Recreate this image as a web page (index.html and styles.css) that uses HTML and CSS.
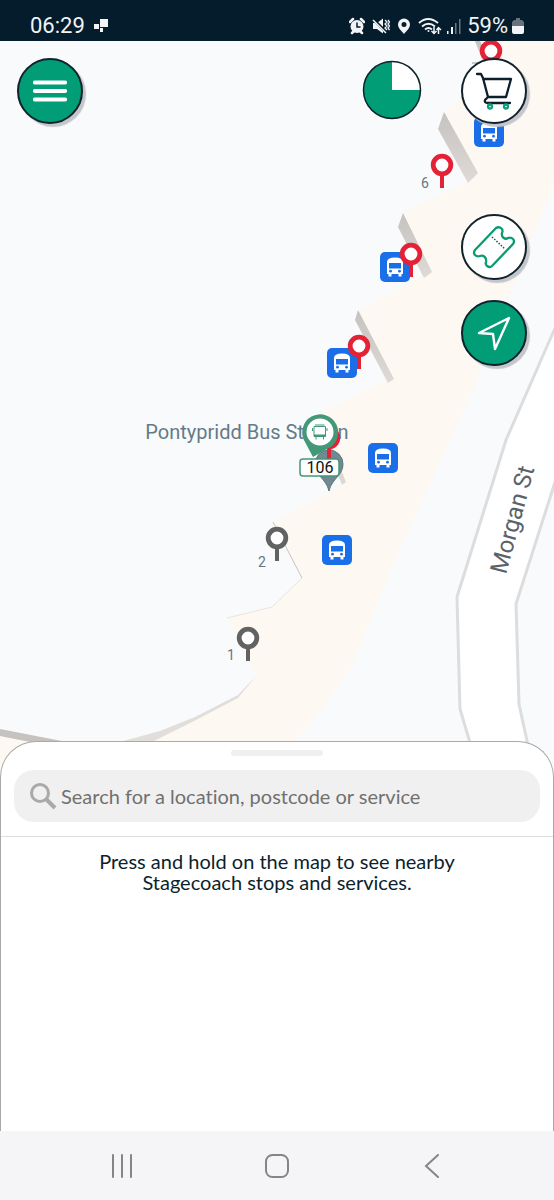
FILE: index.html
```html
<!DOCTYPE html>
<html lang="en">
<head>
<meta charset="utf-8">
<meta name="viewport" content="width=device-width, initial-scale=1">
<title>Stagecoach map</title>
<link rel="stylesheet" href="styles.css">
</head>
<body>
<header class="status">
  <div class="status-group">
    <span>06:29</span>
    <svg class="status-app" width="16" height="16" viewBox="0 0 16 16" fill="#f1f3f6"><path d="M7 1h8v8H7zM1 6h5v5H1zM7 10h3v4H7z"/></svg>
  </div>
  <div class="status-group status-right">
    <svg width="16" height="18" viewBox="0 0 16 18"><circle cx="8" cy="9.500" r="6.500" fill="#f1f3f6"/><path d="M1 5l3-3M15 5l-3-3M3 16l2-2M13 16l-2-2" stroke="#f1f3f6" stroke-width="2.500" stroke-linecap="round"/><path d="M8 5.500V10h3.500" fill="none" stroke="#041c2c" stroke-width="1.500"/></svg>
    <svg class="mute" width="18" height="18" viewBox="0 0 18 18"><path d="M1 6h4l6-4.500v15L5 12H1z" fill="#f1f3f6"/><path d="M1 2l14 14" stroke="#041c2c" stroke-width="3"/><path d="M1 3l13 13" stroke="#f1f3f6" stroke-width="1.500"/><path d="M13 3l2 2-2 2 2 2-2 2 2 2M16 3l1.500 2L16 7l1.500 2L16 11l1.500 2" fill="none" stroke="#f1f3f6" stroke-width="1.300"/></svg>
    <svg class="place" width="14" height="18" viewBox="0 0 14 18"><path fill-rule="evenodd" d="M7 1.500a6 6 0 0 1 6 6C13 11 9.500 14 7 17 4.500 14 1 11 1 7.500a6 6 0 0 1 6-6zM7 5a2.500 2.500 0 1 0 0 5 2.500 2.500 0 0 0 0-5z" fill="#f1f3f6"/></svg>
    <svg class="wifi" width="24" height="18" viewBox="0 0 24 18" fill="none" stroke="#f1f3f6" stroke-width="2"><path d="M1 6Q10-2 20 6M4 9.500Q10.500 4 17 9.500M7 12.500q3.500-3 7 0"/><circle cx="10.500" cy="14" r="1" fill="#f1f3f6" stroke="none"/><path d="M16 10v6M13.500 14l2.500 2.500 2.500-2.500M20.500 17v-6M18.500 13l2-2.500 2.500 2.500" stroke-width="1.500"/></svg>
    <svg class="signal" width="15" height="18" viewBox="0 0 15 18"><path fill="#f1f3f6" d="M1 14h1.500v3H1zM5 10h2v7H5z"/><path fill="#667785" d="M9 6h1.500v11H9zM13 2h1.500v15H13z"/></svg>
    <span>59%</span>
    <svg class="battery" width="12" height="17" viewBox="0 0 12 17"><path d="M4 0h4v2h2l2 2v4H0V4l2-2h2z" fill="#68727b"/><path d="M0 8h12v6q0 2-2 2H2q-2 0-2-2z" fill="#f1f3f6"/></svg>
  </div>
</header>

<main class="stage">
  <svg class="map" viewBox="0 41 554 1090" preserveAspectRatio="xMidYMin slice" role="img" aria-label="Map of Pontypridd Bus Station">
    <defs>
      <linearGradient id="wall" x1="0" y1="0" x2="0" y2="1"><stop offset="0" stop-color="#c5c2bf"/><stop offset="1" stop-color="#dedbd7"/></linearGradient>
      <g id="stop-sign"><rect x="-15" y="-15" width="30" height="30" rx="5" fill="#1a6fe8"/><path d="M-8-5q0-4.500 8-4.500t8 4.500V7H6.500v2.500H3.500V7h-7v2.500h-3V7H-8z" fill="#fff"/><path d="M-6-4H6V1.500H-6z" fill="#1a6fe8"/><circle cx="-4.500" cy="4.200" r="1.400" fill="#1a6fe8"/><circle cx="4.500" cy="4.200" r="1.400" fill="#1a6fe8"/></g>
      <g id="stop-pin"><path d="M0 8v15" stroke="currentColor" stroke-width="4"/><circle r="8.800" fill="#fff" stroke="currentColor" stroke-width="4.800"/></g>
    </defs>
    <path class="ground" d="M0 41h554v1090H0z"/>
    <path class="paving" d="M475 41h79v139l-11 30-70 180-39 85-39 85-43 105-27 40-28 36v60H0V733l60 12 63-4 37-9 35-14 43-22 18-20-29-58 45-11 30-29-29-56 69-37-26-70 69-35-27-69 65-36-20-63 64-30-24-70 44-35z"/>
    <path d="M475 41h5l7 14 1 20z" fill="url(#wall)"/>
    <path d="M444 112l-6 17 30 54 10-10z" fill="url(#wall)"/>
    <path d="M403 213l-5 14 26 51 8-6z" fill="url(#wall)"/>
    <path d="M358 310l-3 10 33 63 6-4z" fill="url(#wall)"/>
    <path d="M318 425l24 60 4-3-20-50z" fill="url(#wall)"/>
    <path d="M0 729l72 14H35L0 736z" fill="#c6c2bf"/>
    <path d="M123 741l37-10 35-14 43-22 18-19-18 22-42 22-42 21z" fill="#e2deda"/>
    <path d="M273 522l29 56" stroke="#c9c4bf" fill="none"/>
    <path d="M302 578l-30 29-45 11" stroke="#eae4de" fill="none"/>
    <path class="road" d="M580 271L506 440l-49 157 3 112 16 54 58 10-15-69-3-100 64-200z"/>
    <text class="road-name" transform="translate(506 575) rotate(-75)">Morgan St</text>
    <text class="bay" x="421" y="188">6</text>
    <text class="bay" x="258" y="567">2</text>
    <text class="bay" x="227" y="660">1</text>
    <path d="M472 63h6" stroke="#8e989d" stroke-width="1"/>
    <text class="station" x="247" y="439">Pontypridd Bus Station</text>
    <use href="#stop-sign" x="489" y="132"/>
    <use href="#stop-sign" x="395" y="267"/>
    <use href="#stop-sign" x="342" y="363"/>
    <use href="#stop-sign" x="383" y="458"/>
    <use href="#stop-sign" x="337" y="550"/>
    <path d="M329 491c-3-13-14-15-14-27a14 14 0 0 1 28 0c0 12-11 14-14 27z" fill="#738795" stroke="#5a7b7a"/>
    <g class="live"><use href="#stop-pin" x="491" y="51"/><use href="#stop-pin" x="442" y="165"/><use href="#stop-pin" x="411" y="254"/><use href="#stop-pin" x="359" y="346"/><use href="#stop-pin" x="329" y="438"/></g>
    <g class="idle"><use href="#stop-pin" x="277" y="538"/><use href="#stop-pin" x="248" y="638"/></g>
    <path d="M313 457l-8-15a18 18 0 1 1 22 7z" fill="#439877"/>
    <circle cx="320" cy="432" r="13.500" fill="#fff"/>
    <path d="M314 426.500h11.500v10H314zM315 425h9.500M316 437v2.500M323.500 437v2.500M312.500 428v3M327 428v3" fill="none" stroke="#439877"/>
    <path d="M314 434.500h11.500v2.500H314z" fill="#439877"/>
    <rect x="300" y="459" width="39" height="17" rx="3" fill="#fff" stroke="#439877" stroke-width="1.500"/>
    <text class="route" x="320" y="473">106</text>
  </svg>

  <div class="controls">
    <button class="round green" aria-label="Menu"><svg width="34" height="22" viewBox="0 0 34 22" stroke="#fff" stroke-width="4.200" stroke-linecap="round"><path d="M2 2.500h30M2 11h30M2 19.500h30"/></svg></button>
    <div class="controls-right">
      <svg class="timer" viewBox="0 0 60 60" role="img" aria-label="Refresh timer"><circle cx="30" cy="30" r="28.500" fill="#009d77"/><path d="M30 30V1.500A28.500 28.500 0 0 1 58.500 30z" fill="#fff"/><circle cx="30" cy="30" r="28.500" fill="none" stroke="#10232b" stroke-width="1.500"/></svg>
      <div class="column">
        <button class="round basket" aria-label="Basket"><svg width="38" height="38" viewBox="0 0 38 38" fill="none" stroke="#0b1f2d" stroke-width="2.300" stroke-linecap="round" stroke-linejoin="round"><path d="M2 2h4l2 4 5 19h18l5-18H8M13 25l-3 3q-1 3 3 3h22"/><g stroke="#0aa079" stroke-width="2.300"><circle cx="15" cy="34.500" r="2"/><circle cx="31" cy="34.500" r="2"/></g></svg></button>
        <button class="round" aria-label="Tickets"><svg width="44" height="44" viewBox="0 0 44 44" fill="none" stroke="#0a9b73" stroke-width="2.300" stroke-linejoin="round"><path d="M24 3q3-2 6 1 1 2 0 4c-1 4 3 7 6 5q3-1 5 1t0 5L20 41q-2 2-5 0-2-2-1-4c1-5-3-7-6-6q-3 1-5-1t0-5z"/><path d="M20 12l13 12" stroke-width="1.500" stroke-dasharray="1.500 1.500" stroke="#1d5d51"/></svg></button>
        <button class="round green" aria-label="My location"><svg width="36" height="36" viewBox="0 0 36 36" fill="none" stroke="#fff" stroke-width="2.400" stroke-linejoin="round"><path d="M33 3L3 18l14 1 2 15z"/></svg></button>
      </div>
    </div>
  </div>

  <section class="sheet">
    <div class="handle"></div>
    <label class="search">
      <svg width="28" height="28" viewBox="0 0 28 28" fill="none" stroke="#a9a9a9" stroke-width="3"><circle cx="11" cy="11" r="8.500"/><path d="M17 17l9 9" stroke-width="4"/></svg>
      <input type="search" aria-label="Search" placeholder="Search for a location, postcode or service">
    </label>
    <p class="hint">Press and hold on the map to see nearby<br>Stagecoach stops and services.</p>
  </section>
</main>

<nav class="system">
  <button aria-label="Recent apps"><svg width="24" height="24" viewBox="0 0 24 24"><path d="M3 1v22M12 1v22M21 1v22"/></svg></button>
  <button aria-label="Home"><svg width="24" height="24" viewBox="0 0 24 24"><rect x="1" y="1" width="22" height="22" rx="6.500"/></svg></button>
  <button aria-label="Back"><svg width="24" height="24" viewBox="0 0 24 24"><path d="M18 1L6 12l12 11"/></svg></button>
</nav>
</body>
</html>
```
FILE: styles.css
```css
* { box-sizing: border-box; }

body {
  margin: 0;
  min-height: 100vh;
  display: flex;
  flex-direction: column;
  font-family: Lato, "Liberation Sans", sans-serif;
  font-variant-ligatures: none;
  color: #0b1f2d;
  background: #fff;
}

button {
  margin: 0;
  padding: 0;
  border: 0;
  background: none;
  display: grid;
  place-items: center;
  cursor: pointer;
}

.status {
  display: flex;
  justify-content: space-between;
  padding: 14px 30px 3px;
  background: #041c2c;
  color: #f1f3f6;
  font: 22px/24px Roboto, sans-serif;
}
.status-group { display: flex; align-items: center; }
.status-app { margin-left: 8px; }
.mute, .place, .wifi { margin-left: 7px; }
.signal { margin: 0 6px 0 4px; }
.battery { margin: 0 0 0 4px; }

.stage {
  position: relative;
  flex: 1;
  display: flex;
  flex-direction: column;
  justify-content: space-between;
  overflow: hidden;
}

.map { position: absolute; inset: 0; width: 100%; height: 100%; font-family: Roboto, sans-serif; }
.ground { fill: #f8fafc; }
.paving { fill: #fdf8f2; }
.road { fill: #fff; stroke: #dcdddf; stroke-width: 3px; }
.road-name { font-size: 24px; fill: #5b6369; }
.bay { font-size: 14px; fill: #657880; }
.station { font-size: 20px; fill: #647b88; text-anchor: middle; }
.route { font-size: 16px; fill: #111; text-anchor: middle; }
.live { color: #e42235; }
.idle { color: #626262; }

.controls {
  position: relative;
  display: flex;
  justify-content: space-between;
  padding: 17px 27px 0 17px;
}
.controls-right { display: flex; gap: 39px; align-items: flex-start; }
.timer { width: 60px; height: 60px; margin-top: 2px; }
.column { display: grid; gap: 20px; }
.round {
  width: 66px;
  height: 66px;
  border: 2px solid #10232b;
  border-radius: 50%;
  background: #fff;
  box-shadow: 3px 3px 1px #c5c6cc;
}
.green { background: #009d77; }
.basket { margin-bottom: 70px; }

.sheet {
  position: relative;
  min-height: 390px;
  border: 1px solid #a9a9a9;
  border-bottom: 0;
  border-radius: 36px 36px 0 0;
  background: #fff;
}
.handle { width: 92px; height: 6px; margin: 8px auto 14px; border-radius: 3px; background: #f0f0f0; }
.search {
  display: flex;
  align-items: center;
  gap: 4px;
  height: 52px;
  margin: 0 13px;
  padding: 0 15px;
  border-radius: 20px;
  background: #f0f0f0;
}
.search input {
  flex: 1;
  min-width: 0;
  padding: 0;
  border: 0;
  outline: 0;
  background: none;
  font: inherit;
  font-size: 20px;
  font-variant-ligatures: none;
  color: #333;
}
.search input::placeholder { color: #707070; opacity: 1; }
.hint {
  margin: 14px 0 0;
  padding: 14px 20px;
  border-top: 1px solid #dedede;
  text-align: center;
  font-size: 20px;
  line-height: 21px;
}

.system {
  display: flex;
  justify-content: space-between;
  padding: 12px 98px;
  background: #f5f5f8;
}
.system button { width: 48px; height: 45px; }
.system svg { fill: none; stroke: #858588; stroke-width: 2px; stroke-linecap: round; }
```
